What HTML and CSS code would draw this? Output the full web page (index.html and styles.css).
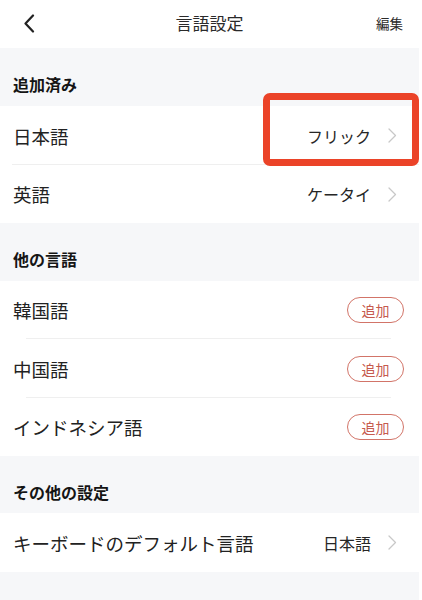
FILE: index.html
```html
<!DOCTYPE html>
<html lang="ja">
<head>
<meta charset="utf-8">
<title>言語設定</title>
<link rel="stylesheet" href="styles.css">
</head>
<body>
<div class="page">
  <header class="topbar">
    <svg class="back" width="12" height="19" viewBox="0 0 12 19"><path d="M10 1.5 L2.5 9.5 L10 17.5" fill="none" stroke="#222" stroke-width="2.2" stroke-linecap="round" stroke-linejoin="round"/></svg>
    <div class="title">言語設定</div>
    <div class="edit">編集</div>
  </header>

  <div class="sec-head">追加済み</div>
  <div class="group">
    <div class="row row-tall sep-full">
      <span class="label">日本語</span>
      <span class="value">フリック</span>
      <svg class="chev" width="9" height="15" viewBox="0 0 9 15"><path d="M1 1 L7.5 7.5 L1 14" fill="none" stroke="#c8c8c8" stroke-width="1.3" stroke-linecap="round" stroke-linejoin="round"/></svg>
    </div>
    <div class="row">
      <span class="label">英語</span>
      <span class="value">ケータイ</span>
      <svg class="chev" width="9" height="15" viewBox="0 0 9 15"><path d="M1 1 L7.5 7.5 L1 14" fill="none" stroke="#c8c8c8" stroke-width="1.3" stroke-linecap="round" stroke-linejoin="round"/></svg>
    </div>
  </div>

  <div class="sec-head">他の言語</div>
  <div class="group">
    <div class="row sep-inset">
      <span class="label">韓国語</span>
      <span class="add">追加</span>
    </div>
    <div class="row row-tall sep-inset">
      <span class="label">中国語</span>
      <span class="add">追加</span>
    </div>
    <div class="row">
      <span class="label">インドネシア語</span>
      <span class="add">追加</span>
    </div>
  </div>

  <div class="sec-head sec-head-short">その他の設定</div>
  <div class="group">
    <div class="row row-tall">
      <span class="label">キーボードのデフォルト言語</span>
      <span class="value">日本語</span>
      <svg class="chev" width="9" height="15" viewBox="0 0 9 15"><path d="M1 1 L7.5 7.5 L1 14" fill="none" stroke="#c8c8c8" stroke-width="1.3" stroke-linecap="round" stroke-linejoin="round"/></svg>
    </div>
  </div>

  <div class="highlight"></div>
</div>
</body>
</html>
```

FILE: styles.css
```css
html, body {
  margin: 0;
  padding: 0;
  background: #ffffff;
}

body {
  font-family: "Noto Sans CJK JP", "Noto Sans", sans-serif;
  color: #1e1e1e;
}

.page {
  position: relative;
  width: 419px;
  min-height: 600px;
  background: #f6f7f9;
}

.topbar {
  height: 48px;
  background: #ffffff;
  display: flex;
  align-items: center;
  justify-content: space-between;
  padding: 0 16px 0 23px;
  box-sizing: border-box;
  position: relative;
}

.back {
  display: block;
  margin-top: -2px;
}

.title {
  position: absolute;
  left: 0;
  right: 0;
  text-align: center;
  font-size: 17px;
  line-height: 20px;
  color: #2a2a2a;
  pointer-events: none;
  margin-top: -2px;
}

.edit {
  font-size: 13.5px;
  line-height: 20px;
  color: #2a2a2a;
  margin-top: -2px;
}

.sec-head {
  height: 58px;
  box-sizing: border-box;
  display: flex;
  align-items: flex-end;
  padding: 0 13px 12px;
  font-size: 16px;
  line-height: 20px;
  font-weight: 700;
  color: #151515;
}

.sec-head-short {
  height: 57px;
  padding-bottom: 11px;
}

.group {
  background: #ffffff;
}

.row {
  height: 58px;
  display: flex;
  align-items: center;
  padding: 0 15px 0 13px;
  position: relative;
  box-sizing: border-box;
}

.row-tall {
  height: 59px;
}

.sep-full::after,
.sep-inset::after {
  content: "";
  position: absolute;
  bottom: 0;
  height: 1px;
  background: #efefef;
}

.sep-full::after {
  left: 12px;
  right: 0;
}

.sep-inset::after {
  left: 26px;
  right: 28px;
}

.label {
  flex: 1;
  font-size: 18.5px;
  line-height: 24px;
  color: #222;
}

.value {
  font-size: 16px;
  line-height: 20px;
  color: #262626;
  margin-right: 17px;
}

.chev {
  display: block;
  margin-right: 7px;
}

.add {
  width: 57px;
  height: 26px;
  box-sizing: border-box;
  border: 1px solid #d27468;
  border-radius: 13px;
  display: flex;
  align-items: center;
  justify-content: center;
  font-size: 14px;
  color: #c65a4e;
}

.highlight {
  position: absolute;
  left: 263px;
  top: 93px;
  width: 156px;
  height: 73px;
  box-sizing: border-box;
  border: 7px solid #eb4328;
  border-radius: 7px;
}
```
